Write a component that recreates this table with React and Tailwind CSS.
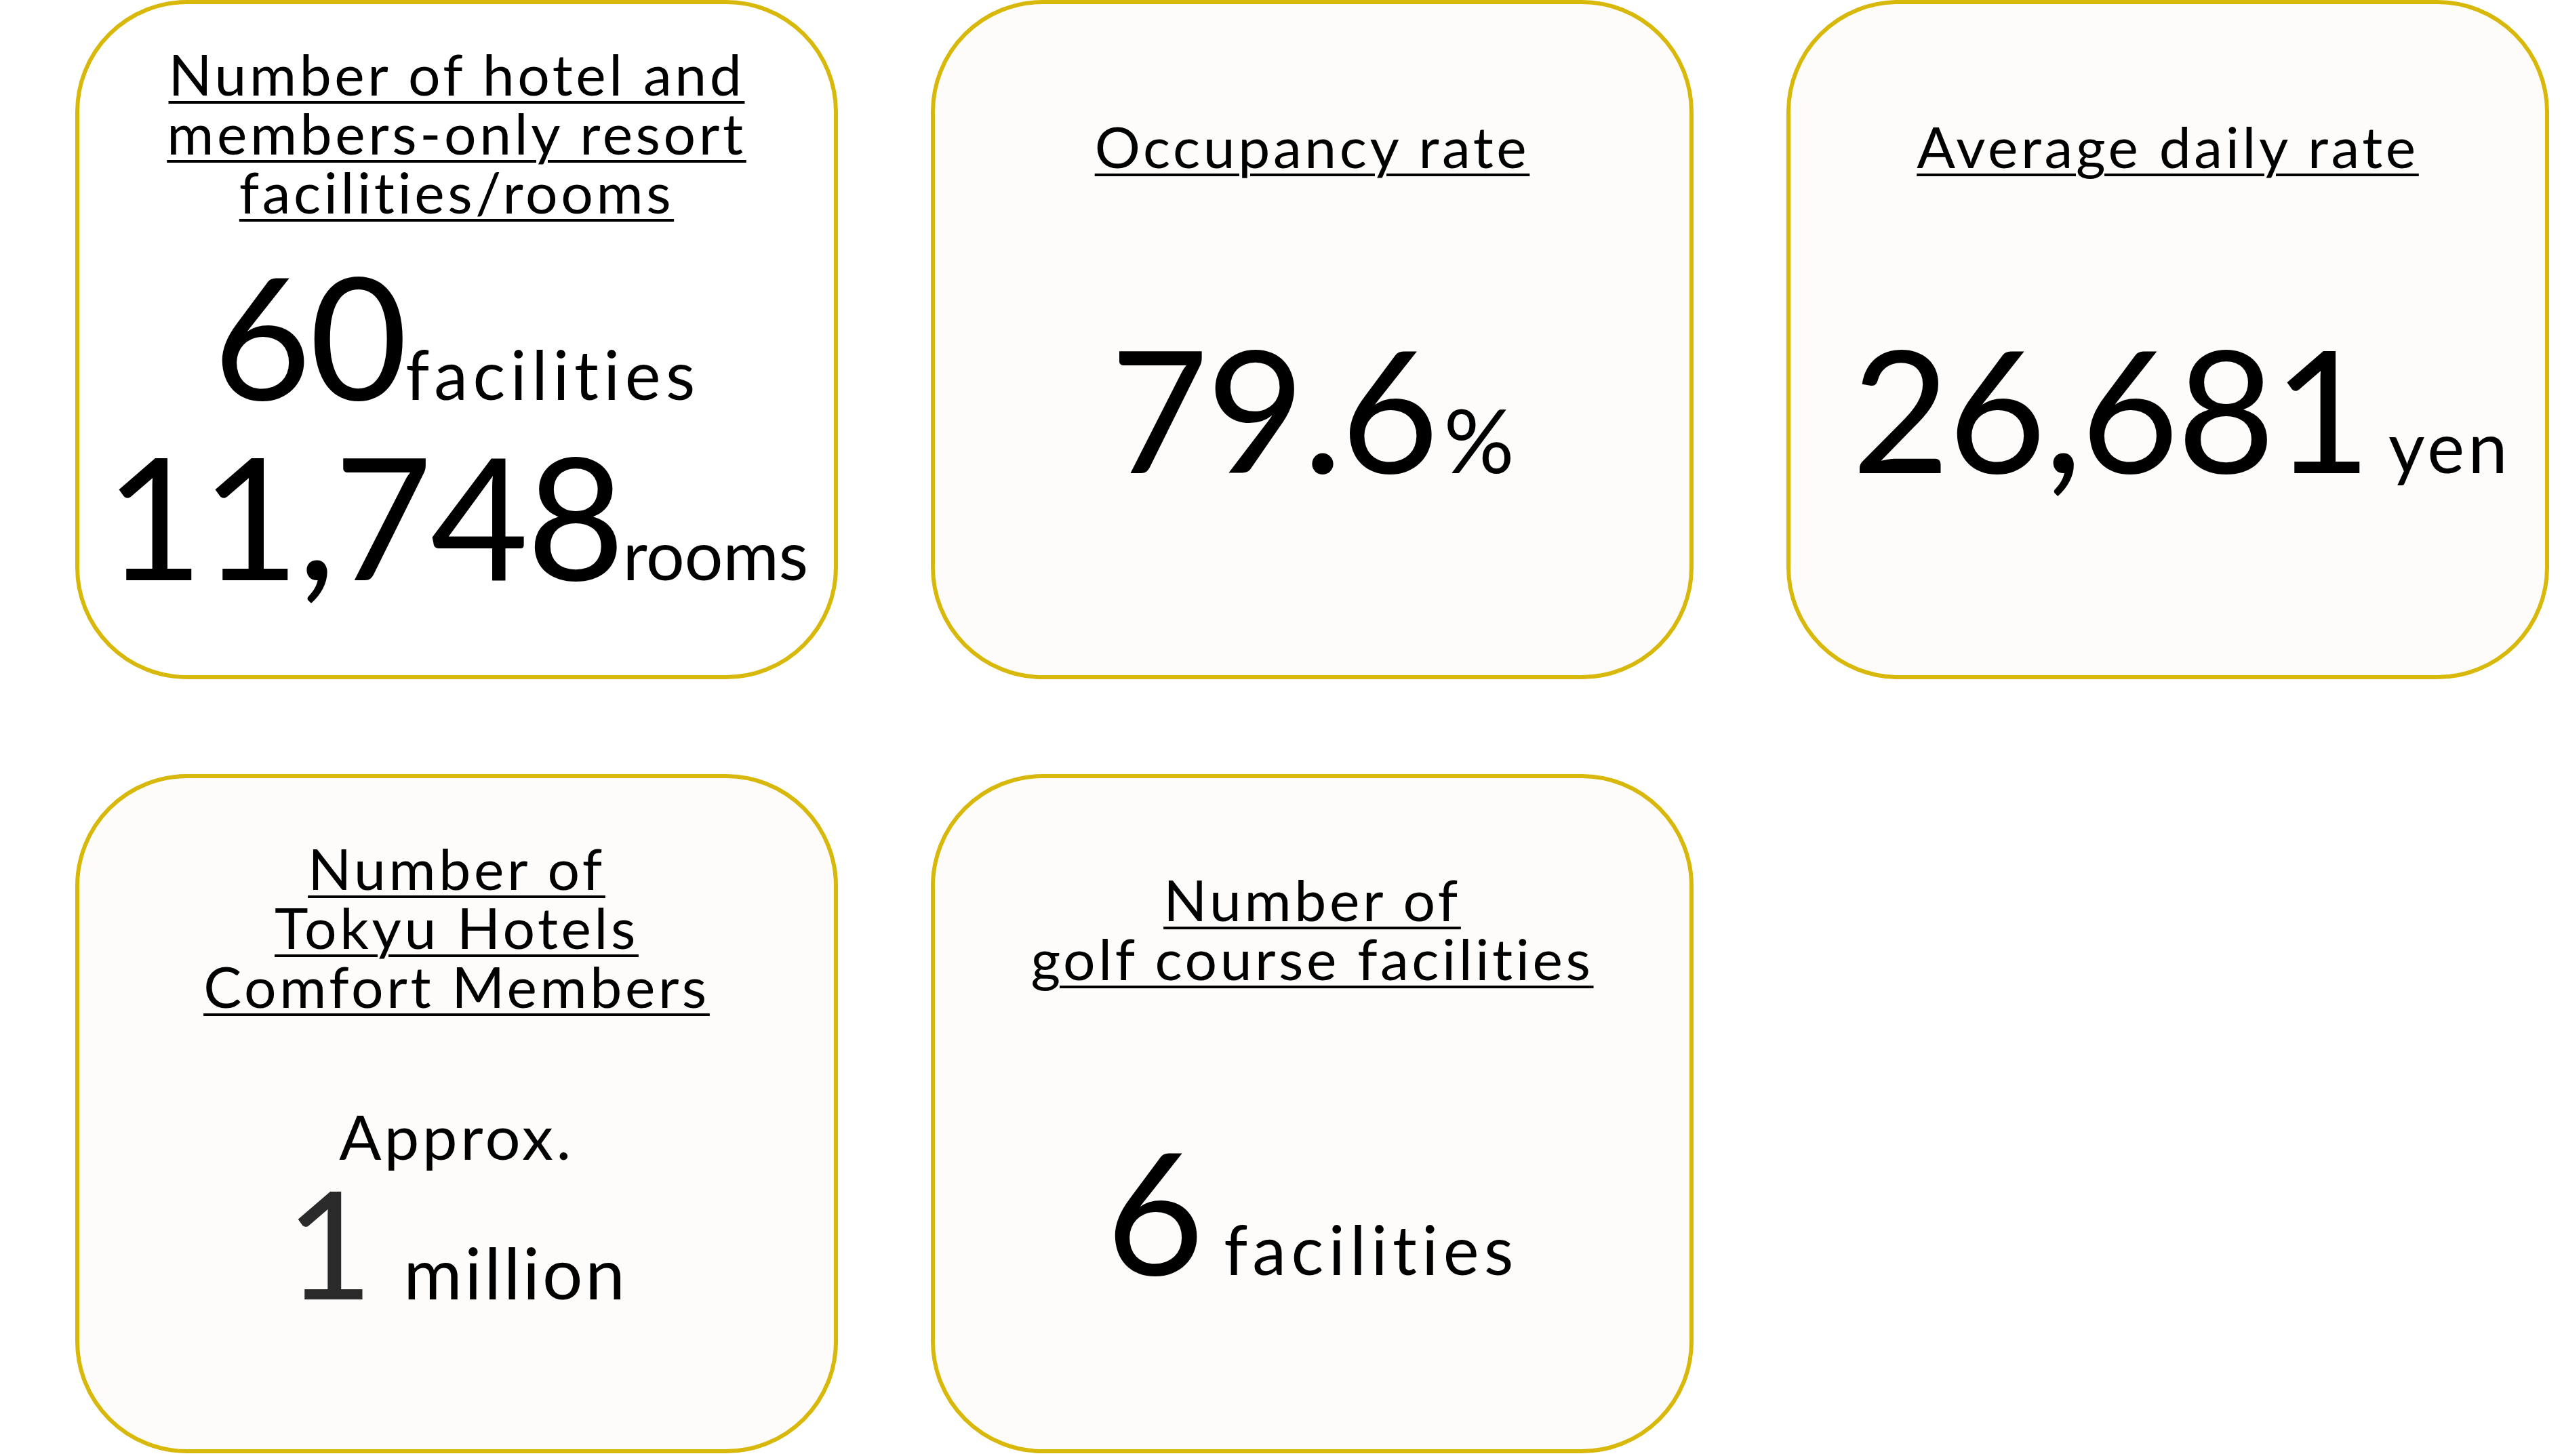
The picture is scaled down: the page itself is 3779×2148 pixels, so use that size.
import React from "react";

function Card({ white, className, children }) {
  return (
    <div
      className={
        "box-border h-[1002px] rounded-[165px] border-[6px] border-[#d8b80a] flex flex-col items-center text-black " +
        (white ? "bg-white " : "bg-[#fdfcfa] ") +
        className
      }
    >
      {children}
    </div>
  );
}

function Title({ children }) {
  return (
    <h3 className="text-center text-[84px] leading-[87px] tracking-[0.055em] underline decoration-[4px] underline-offset-[8px]">
      {children}
    </h3>
  );
}

function Value({ num, unit, unitClass, className }) {
  return (
    <div className={"flex items-baseline whitespace-nowrap " + className}>
      <span className="text-[250px] leading-none tracking-[-0.012em]">{num}</span>
      <span className={"leading-none " + unitClass}>{unit}</span>
    </div>
  );
}

export default function App() {
  return (
    <div className="min-h-screen bg-white font-['Lato','Noto_Sans',sans-serif] [font-variant-ligatures:none]">
      <div className="grid grid-cols-[1125px_1125px_1125px] gap-x-[137px] gap-y-[140px] pl-[111px]">
        {/* ホテル・会員制リゾート */}
        <Card white className="pt-[59px]">
          <Title>
            Number of hotel and
            <br />
            members-only resort
            <br />
            facilities/rooms
          </Title>
          <Value
            num="60"
            unit="facilities"
            unitClass="text-[100px] tracking-[0.075em]"
            className="mt-[42px]"
          />
          <Value num="11,748" unit="rooms" unitClass="text-[100px]" className="mt-[16px]" />
        </Card>

        <Card className="pt-[166px]">
          <Title>Occupancy rate</Title>
          <Value
            num="79.6"
            unit="%"
            unitClass="text-[130px] ml-[10px]"
            className="mt-[217px]"
          />
        </Card>

        <Card className="pt-[166px]">
          <Title>Average daily rate</Title>
          <Value
            num="26,681"
            unit="yen"
            unitClass="text-[104px] tracking-[0.05em] ml-[28px]"
            className="mt-[217px] ml-[40px]"
          />
        </Card>

        <Card className="pt-[89px]">
          <Title>
            Number of
            <br />
            Tokyu Hotels
            <br />
            Comfort Members
          </Title>
          <p className="mt-[132px] text-[92px] leading-none tracking-[0.05em]">Approx.</p>
          <div className="-mt-[2px] flex items-baseline whitespace-nowrap">
            <span className="text-[222px] leading-none text-[#2a2a2a]">1</span>
            <span className="ml-[45px] text-[105px] leading-none tracking-[0.035em]">million</span>
          </div>
        </Card>

        <Card className="pt-[135px]">
          <Title>
            Number of
            <br />
            golf course facilities
          </Title>
          <Value
            num="6"
            unit="facilities"
            unitClass="text-[100px] tracking-[0.075em] ml-[32px]"
            className="mt-[202px]"
          />
        </Card>
      </div>
    </div>
  );
}
